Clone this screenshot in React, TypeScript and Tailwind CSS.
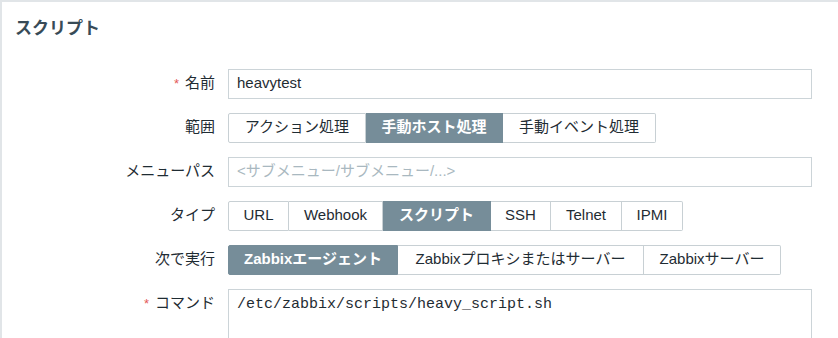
import { ReactNode } from "react";

const jp = "font-['Liberation_Sans','Noto_Sans_CJK_JP',sans-serif]";

const Label = (props: { text: string; required?: boolean }) => (
  <div className="flex h-[30px] items-center justify-end text-[15px] text-[#1f2c33]">
    {props.required && <span className="mr-[6px] text-[13px] text-[#e45959]">*</span>}
    {props.text}
  </div>
);

const Segments = (props: { items: [string, number][]; active: number }) => (
  <div className="flex h-[30px]">
    {props.items.map(([label, w], i) => (
      <div
        key={label}
        style={{ width: w }}
        className={
          "flex items-center justify-center border-y border-r text-[15px] " +
          (i === 0 ? "rounded-l-[2px] border-l " : "") +
          (i === props.items.length - 1 ? "rounded-r-[2px] " : "") +
          (i === props.active
            ? "border-[#768d99] bg-[#768d99] font-bold text-white"
            : "border-[#c8d0d4] bg-white text-[#1f2c33]")
        }
      >
        {label}
      </div>
    ))}
  </div>
);

const Row = (props: { label: string; required?: boolean; children: ReactNode }) => (
  <>
    <Label text={props.label} required={props.required} />
    <div>{props.children}</div>
  </>
);

export default function App() {
  return (
    <div className={`h-[338px] w-[838px] overflow-hidden bg-white ${jp}`}>
      <div className="h-full border-l-2 border-t-2 border-[#e1e5e8]">
        <h1 className="pl-[13px] pt-[14px] text-[17px] font-bold text-[#384b57]">スクリプト</h1>
        <div className="mt-[27px] grid grid-cols-[213px_584px] gap-x-[13px] gap-y-[14px]">
          <Row label="名前" required>
            <div className="flex h-[30px] items-center border border-[#ccd4d8] pl-[8px] text-[15px] text-[#1f2c33]">
              heavytest
            </div>
          </Row>
          <Row label="範囲">
            <Segments
              active={1}
              items={[
                ["アクション処理", 138],
                ["手動ホスト処理", 137],
                ["手動イベント処理", 153],
              ]}
            />
          </Row>
          <Row label="メニューパス">
            <div className="flex h-[30px] items-center border border-[#ccd4d8] pl-[8px] text-[15px] text-[#a9b8c0]">
              &lt;サブメニュー/サブメニュー/...&gt;
            </div>
          </Row>
          <Row label="タイプ">
            <Segments
              active={2}
              items={[
                ["URL", 61],
                ["Webhook", 94],
                ["スクリプト", 108],
                ["SSH", 60],
                ["Telnet", 71],
                ["IPMI", 61],
              ]}
            />
          </Row>
          <Row label="次で実行">
            <Segments
              active={0}
              items={[
                ["Zabbixエージェント", 170],
                ["Zabbixプロキシまたはサーバー", 246],
                ["Zabbixサーバー", 137],
              ]}
            />
          </Row>
          <Row label="コマンド" required>
            <div className="h-[80px] border border-[#ccd4d8] pl-[8px] pt-[4px] font-['Liberation_Mono',monospace] text-[15px] text-[#1f2c33]">
              /etc/zabbix/scripts/heavy_script.sh
            </div>
          </Row>
        </div>
      </div>
    </div>
  );
}
